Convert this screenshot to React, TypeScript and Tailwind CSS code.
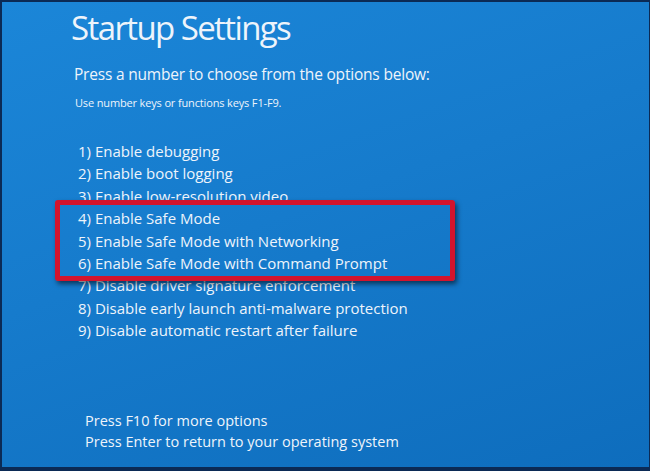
const options = [
  '1) Enable debugging',
  '2) Enable boot logging',
  '3) Enable low-resolution video',
  '4) Enable Safe Mode',
  '5) Enable Safe Mode with Networking',
  '6) Enable Safe Mode with Command Prompt',
  '7) Disable driver signature enforcement',
  '8) Disable early launch anti-malware protection',
  '9) Disable automatic restart after failure',
];

export default function App() {
  return (
    <div className="relative w-[650px] h-[471px] overflow-hidden bg-[#0b2a55]">
      <div
        className="absolute top-[2px] bottom-[4px] left-[2px] right-[1px] bg-[linear-gradient(160deg,#1b86d8_0%,#167bcc_45%,#0e6dbd_100%)] text-[#eef4fb]"
        style={{ fontFamily: '"Open Sans", "Noto Sans", sans-serif' }}
      >
        <div className="flex flex-col">
          {/* Header */}
          <h1 className="ml-[69px] mt-[2px] text-[33px] leading-[48px] font-normal tracking-[-1.6px]">
            Startup Settings
          </h1>
          <p className="ml-[72px] mt-[10px] text-[15.5px] leading-[24px] tracking-[-0.2px]">
            Press a number to choose from the options below:
          </p>
          <p className="ml-[73px] mt-[9px] text-[11px] leading-[16px] tracking-[-0.15px]">
            Use number keys or functions keys F1-F9.
          </p>

          {/* Options */}
          <ul className="ml-[76px] mt-[29px] text-[15px] leading-[22.4px]">
            {options.map((o) => (
              <li key={o}>{o}</li>
            ))}
          </ul>

          {/* Footer */}
          <div className="ml-[83px] mt-[68px] text-[14.5px] leading-[21px]">
            <p>Press F10 for more options</p>
            <p>Press Enter to return to your operating system</p>
          </div>
        </div>
      </div>

      {/* Highlight box */}
      <div className="absolute left-[55px] top-[200px] w-[400px] h-[81px] border-[5px] border-[#d3142d] rounded-[3px] shadow-[2px_3px_5px_rgba(0,0,0,0.55)]" />
    </div>
  );
}
